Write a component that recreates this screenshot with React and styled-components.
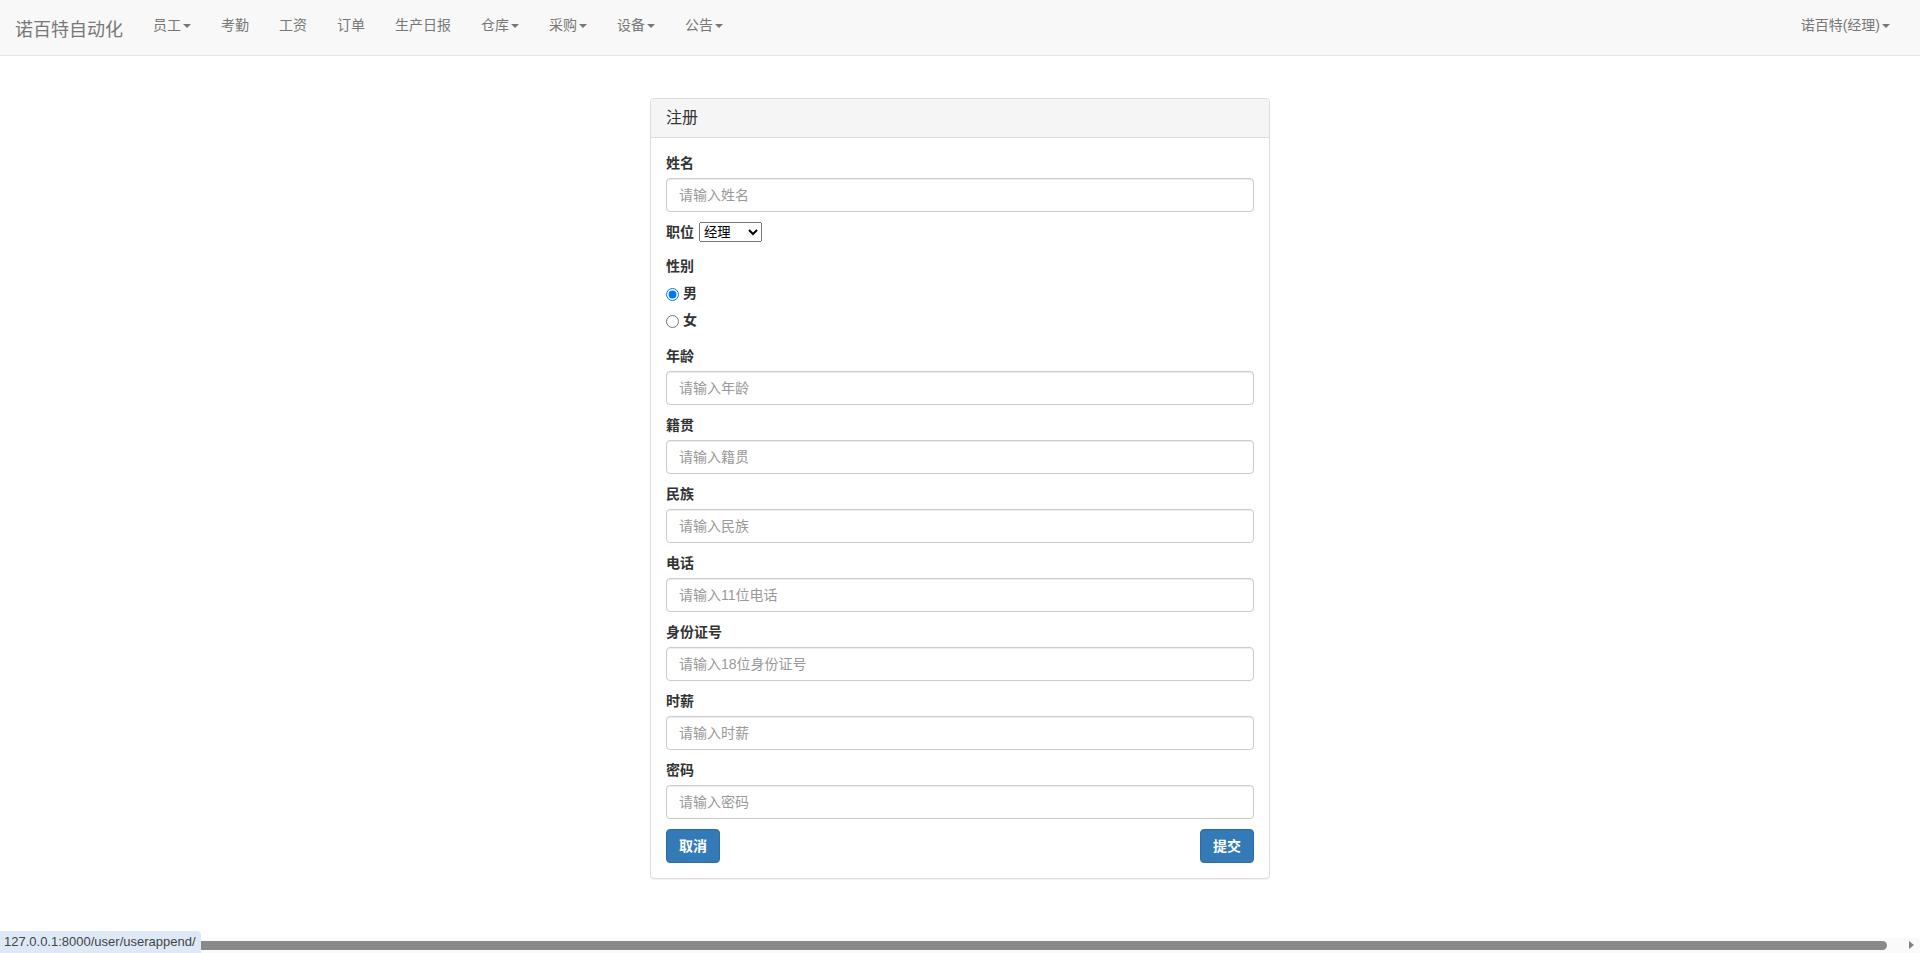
import React from "react"
import styled, { createGlobalStyle } from "styled-components"

const GlobalStyle = createGlobalStyle`
  html, body {
    margin: 0;
    padding: 0;
    background: #fff;
  }
  body {
    font-family: "Liberation Sans", "Noto Sans CJK SC", sans-serif;
    font-size: 14px;
    line-height: 1.42857;
    color: #333;
  }
  * {
    box-sizing: border-box;
  }
`

const Navbar = styled.nav`
  display: flex;
  align-items: flex-start;
  height: 56px;
  background-color: #f8f8f8;
  border-bottom: 1px solid #e7e7e7;
`

const Brand = styled.a`
  display: block;
  padding: 20px 15px 15px;
  font-size: 18px;
  line-height: 20px;
  color: #777;
  text-decoration: none;
  cursor: pointer;
`

const NavList = styled.ul`
  display: flex;
  margin: 0;
  padding: 0;
  list-style: none;
  margin-left: ${props => (props.$right ? "auto" : "0")};
  margin-right: ${props => (props.$right ? "15px" : "0")};
`

const NavLink = styled.a`
  display: block;
  padding: 15px;
  font-size: 14px;
  line-height: 20px;
  color: #777;
  text-decoration: none;
  cursor: pointer;
  &:hover {
    color: #333;
  }
`

const Caret = styled.span`
  display: inline-block;
  width: 0;
  height: 0;
  margin-left: 2px;
  vertical-align: middle;
  border-top: 4px solid;
  border-right: 4px solid transparent;
  border-left: 4px solid transparent;
`

const Main = styled.main`
  display: flex;
  justify-content: center;
  padding-top: 42px;
  padding-bottom: 60px;
`

const Panel = styled.section`
  width: 620px;
  background-color: #fff;
  border: 1px solid #ddd;
  border-radius: 4px;
  box-shadow: 0 1px 1px rgba(0, 0, 0, 0.05);
`

const PanelHeading = styled.div`
  padding: 10px 15px;
  background-color: #f5f5f5;
  border-bottom: 1px solid #ddd;
  border-top-left-radius: 3px;
  border-top-right-radius: 3px;
  color: #333;
`

const PanelTitle = styled.h3`
  margin: 0;
  font-size: 16px;
  font-weight: 400;
  line-height: 18px;
`

const PanelBody = styled.form`
  padding: 15px;
`

const Field = styled.div`
  margin-bottom: ${props => props.$mb || 10}px;
`

const FieldLabel = styled.label`
  display: ${props => (props.$inline ? "inline-block" : "block")};
  margin-bottom: ${props => (props.$inline ? "0" : "5px")};
  font-weight: 700;
  line-height: 20px;
`

const TextInput = styled.input`
  display: block;
  width: 100%;
  height: 34px;
  padding: 6px 12px;
  font-family: inherit;
  font-size: 14px;
  line-height: 1.42857;
  color: #555;
  background-color: #fff;
  border: 1px solid #ccc;
  border-radius: 4px;
  box-shadow: inset 0 1px 1px rgba(0, 0, 0, 0.075);
  outline: none;
  &::placeholder {
    color: #999;
  }
  &:focus {
    border-color: #66afe9;
    box-shadow: inset 0 1px 1px rgba(0, 0, 0, 0.075),
      0 0 8px rgba(102, 175, 233, 0.6);
  }
`

const PositionRow = styled.div`
  display: flex;
  align-items: center;
  gap: 5px;
  height: 20px;
  margin-bottom: 14px;
`

const Select = styled.select`
  width: 63px;
  height: 20px;
  font-family: "Liberation Sans", "Noto Sans CJK SC", sans-serif;
  font-size: 13.33px;
  color: #000;
`

const RadioList = styled.div`
  display: flex;
  flex-direction: column;
  gap: 7px;
  padding-top: 3px;
`

const RadioLabel = styled.label`
  display: flex;
  align-items: center;
  height: 20px;
  font-weight: 700;
  cursor: pointer;
`

const Radio = styled.input`
  width: 13px;
  height: 13px;
  margin: 0 4px 0 0;
`

const ButtonRow = styled.div`
  display: flex;
  justify-content: space-between;
`

const Button = styled.button`
  height: 34px;
  padding: 6px 12px;
  font-family: inherit;
  font-size: 14px;
  font-weight: 700;
  line-height: 20px;
  color: #fff;
  background-color: #337ab7;
  border: 1px solid #2e6da4;
  border-radius: 4px;
  cursor: pointer;
  &:hover {
    background-color: #286090;
    border-color: #204d74;
  }
`

const ScrollTrack = styled.div`
  position: fixed;
  left: 0;
  right: 0;
  bottom: 0;
  height: 15px;
  background-color: #fafafa;
`

const ScrollThumb = styled.div`
  position: absolute;
  left: 15px;
  right: 33px;
  top: 3px;
  height: 9px;
  border-radius: 5px;
  background-color: #8a8a8a;
`

const ScrollArrow = styled.div`
  position: absolute;
  right: 6px;
  top: 3px;
  width: 0;
  height: 0;
  border-top: 4px solid transparent;
  border-bottom: 4px solid transparent;
  border-left: 5px solid #808080;
`

const StatusBubble = styled.div`
  position: fixed;
  left: 0;
  bottom: 0;
  height: 22px;
  padding: 0 5px 0 4px;
  font-family: "Liberation Sans", sans-serif;
  font-size: 13px;
  line-height: 22px;
  color: #444;
  background-color: #dfe8f6;
  border-top-right-radius: 4px;
`

const menu = [
  { label: "员工", drop: true },
  { label: "考勤" },
  { label: "工资" },
  { label: "订单" },
  { label: "生产日报" },
  { label: "仓库", drop: true },
  { label: "采购", drop: true },
  { label: "设备", drop: true },
  { label: "公告", drop: true },
]

const before = [{ name: "name", label: "姓名", placeholder: "请输入姓名" }]

const after = [
  { name: "age", label: "年龄", placeholder: "请输入年龄" },
  { name: "native", label: "籍贯", placeholder: "请输入籍贯" },
  { name: "nation", label: "民族", placeholder: "请输入民族" },
  { name: "phone", label: "电话", placeholder: "请输入11位电话" },
  { name: "idcard", label: "身份证号", placeholder: "请输入18位身份证号" },
  { name: "wage", label: "时薪", placeholder: "请输入时薪" },
  { name: "password", label: "密码", placeholder: "请输入密码", type: "password" },
]

const TextField = ({ field }) => (
  <Field>
    <FieldLabel htmlFor={field.name}>{field.label}</FieldLabel>
    <TextInput
      id={field.name}
      name={field.name}
      type={field.type || "text"}
      placeholder={field.placeholder}
    />
  </Field>
)

const App = () => (
  <>
    <GlobalStyle />
    <Navbar>
      <Brand>诺百特自动化</Brand>
      <NavList>
        {menu.map(item => (
          <li key={item.label}>
            <NavLink>
              {item.label}
              {item.drop && <Caret />}
            </NavLink>
          </li>
        ))}
      </NavList>
      <NavList $right>
        <li>
          <NavLink>
            诺百特(经理)
            <Caret />
          </NavLink>
        </li>
      </NavList>
    </Navbar>

    <Main>
      <Panel>
        <PanelHeading>
          <PanelTitle>注册</PanelTitle>
        </PanelHeading>
        <PanelBody onSubmit={e => e.preventDefault()}>
          {before.map(f => (
            <TextField key={f.name} field={f} />
          ))}
          <PositionRow>
            <FieldLabel $inline htmlFor="position">
              职位
            </FieldLabel>
            <Select id="position" name="position" defaultValue="经理">
              <option value="经理">经理</option>
              <option value="员工">员工</option>
            </Select>
          </PositionRow>
          <Field $mb={15}>
            <FieldLabel>性别</FieldLabel>
            <RadioList>
              <RadioLabel>
                <Radio type="radio" name="gender" value="男" defaultChecked />
                男
              </RadioLabel>
              <RadioLabel>
                <Radio type="radio" name="gender" value="女" />
                女
              </RadioLabel>
            </RadioList>
          </Field>
          {after.map(f => (
            <TextField key={f.name} field={f} />
          ))}
          <ButtonRow>
            <Button type="button">取消</Button>
            <Button type="submit">提交</Button>
          </ButtonRow>
        </PanelBody>
      </Panel>
    </Main>

    <ScrollTrack>
      <ScrollThumb />
      <ScrollArrow />
    </ScrollTrack>
    <StatusBubble>127.0.0.1:8000/user/userappend/</StatusBubble>
  </>
)

export default App
